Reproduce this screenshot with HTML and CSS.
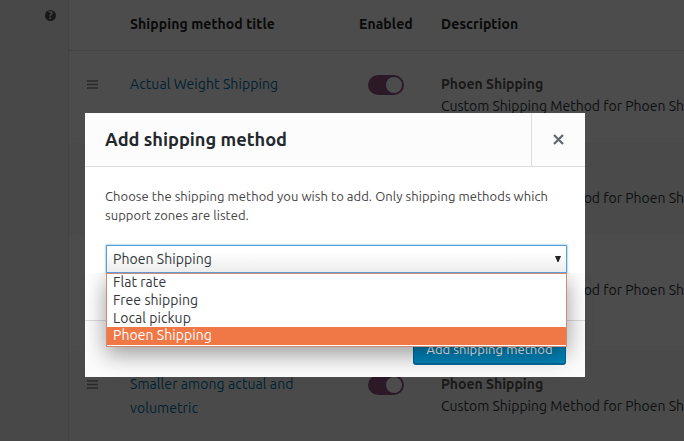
FILE: index.html
```html
<!DOCTYPE html>
<html lang="en">
<head>
<meta charset="utf-8">
<title>Shipping methods</title>
<link rel="stylesheet" href="styles.css">
</head>
<body>
<svg class="defs" aria-hidden="true">
  <symbol id="grip" viewBox="0 0 11 9"><path d="M0 1h11M0 4.5h11M0 8h11" stroke="#8a8a8a" stroke-width="1.4"/></symbol>
</svg>
<main class="page">
  <aside class="side"><span class="help">?</span></aside>
  <section class="table">
    <div class="row head"><span></span><b>Shipping method title</b><b>Enabled</b><b>Description</b></div>
    <div class="row">
      <svg class="grip"><use href="#grip"/></svg><a class="name">Actual Weight Shipping</a><i class="toggle"></i>
      <div class="desc"><b>Phoen Shipping</b><p>Custom Shipping Method for Phoen Shipping</p></div>
    </div>
    <div class="row alt">
      <svg class="grip"><use href="#grip"/></svg><a class="name"></a><i class="toggle"></i>
      <div class="desc"><b>Phoen Shipping</b><p>Custom Shipping Method for Phoen Shipping</p></div>
    </div>
    <div class="row tall">
      <svg class="grip"><use href="#grip"/></svg><a class="name"></a><i class="toggle"></i>
      <div class="desc"><b>Phoen Shipping</b><p>Custom Shipping Method for Phoen Shipping</p></div>
    </div>
    <div class="row alt last">
      <svg class="grip"><use href="#grip"/></svg><a class="name">Smaller among actual and<br>volumetric</a><i class="toggle"></i>
      <div class="desc"><b>Phoen Shipping</b><p>Custom Shipping Method for Phoen Shipping</p></div>
    </div>
  </section>
</main>
<div class="backdrop"></div>
<div class="modal" role="dialog">
  <header class="modal-head">
    <h1>Add shipping method</h1>
    <button class="close" aria-label="Close"><svg width="11" height="11" viewBox="0 0 11 11"><path d="M1 1l9 9M10 1l-9 9" stroke="#646a70" stroke-width="2.3"/></svg></button>
  </header>
  <div class="modal-body">
    <p class="intro">Choose the shipping method you wish to add. Only shipping methods which<br>support zones are listed.</p>
    <div class="select"><span>Phoen Shipping</span><svg width="6" height="6" viewBox="0 0 6 6"><path d="M0 0h6L3.5 6H2.5z" fill="#222"/></svg>
      <ul class="options">
        <li>Flat rate</li><li>Free shipping</li><li>Local pickup</li><li class="selected">Phoen Shipping</li>
      </ul>
    </div>
  </div>
  <footer class="modal-foot"><button class="add">Add shipping method</button></footer>
</div>
</body>
</html>
```
FILE: styles.css
```css
* { box-sizing: border-box; }
body { margin: 0; width: 684px; height: 441px; overflow: hidden; font-family: Ubuntu, "Noto Sans", sans-serif; font-size: 14px; color: #32373c; }
p, h1, ul { margin: 0; padding: 0; }
.defs { position: absolute; width: 0; height: 0; }
.page { display: flex; height: 441px; overflow: hidden; background: #f1f1f1; }
.side { width: 68px; flex: none; padding: 10px 0 0 45px; }
.help { display: flex; align-items: center; justify-content: center; width: 11px; height: 11px; border-radius: 50%; background: #555; color: #f1f1f1; font-size: 10px; font-weight: 700; }
.table { width: 616px; flex: none; border-left: 1px solid #e1e1e1; background: #fff; overflow: hidden; }
.row { display: grid; grid-template-columns: 61px 229px 82px 300px; height: 92px; padding-top: 22px; }
.head { height: 51px; padding-top: 12px; line-height: 24px; color: #222; border-bottom: 1px solid #e1e1e1; letter-spacing: .08px; }
.alt { background: #f9f9f9; }
.tall { height: 116px; }
.last { height: 90px; flex: none; }
.grip { width: 11px; height: 9px; margin: 7px 0 0 18px; }
.name { color: #0073aa; line-height: 24px; margin-top: -1px; letter-spacing: .08px; }
.toggle { width: 36px; height: 20px; margin: 2px 0 0 9px; border: 2px solid #935687; border-radius: 10px; background: #935687; display: flex; justify-content: flex-end; }
.toggle::after { content: ""; width: 16px; height: 16px; border-radius: 50%; background: #fff; }
.desc { line-height: 22px; white-space: nowrap; }
.desc b { color: #555; }
.backdrop { position: absolute; inset: 0; background: rgba(0,0,0,.7); }
.modal { position: absolute; left: 85px; top: 113px; width: 500px; height: 264px; background: #fff; display: flex; flex-direction: column; }
.modal-head { height: 54px; display: flex; justify-content: space-between; background: #fcfcfc; border-bottom: 1px solid #ddd; }
h1 { font-size: 18.2px; line-height: 53px; padding-left: 20px; color: #23282d; }
.close { width: 54px; border: 0; border-left: 1px solid #ddd; background: none; padding: 0; display: flex; align-items: center; justify-content: center; }
.modal-body { height: 153px; padding: 20px 18px 0 20px; }
.intro { font-size: 13px; line-height: 19px; color: #444; white-space: nowrap; letter-spacing: .05px; }
.select { position: relative; height: 28px; width: 461px; margin: 20px 0 0 1px; padding: 0 5px 0 6px; display: flex; align-items: center; justify-content: space-between; border: 1px solid #5b9dd9; box-shadow: 0 0 2px rgba(30,140,190,.8); background: linear-gradient(#fff 20%, #ededed); letter-spacing: .06px; }
.options { position: absolute; z-index: 1; left: -1px; top: 27px; width: 461px; height: 74px; border: 1px solid #d28b73; background: #fff; list-style: none; box-shadow: 0 7px 22px rgba(0,0,0,.4); clip-path: inset(0 -30px -40px -30px); }
.options li { height: 18px; line-height: 17px; padding-left: 6px; }
.options li:nth-child(3) { height: 17px; }
.options .selected { background: #f07746; color: #fff; }
.modal-foot { height: 57px; border-top: 1px solid #ddd; background: #fcfcfc; padding: 14px 19px 0 0; display: flex; justify-content: flex-end; }
.add { width: 153px; height: 29px; line-height: 27px; padding: 0; border: 1px solid #006799; border-radius: 3px; background: #0085ba; box-shadow: 0 1px 0 #006799; color: #fff; font-family: inherit; font-size: 13px; letter-spacing: .05px; text-shadow: 0 -1px 1px #006799; }
```
